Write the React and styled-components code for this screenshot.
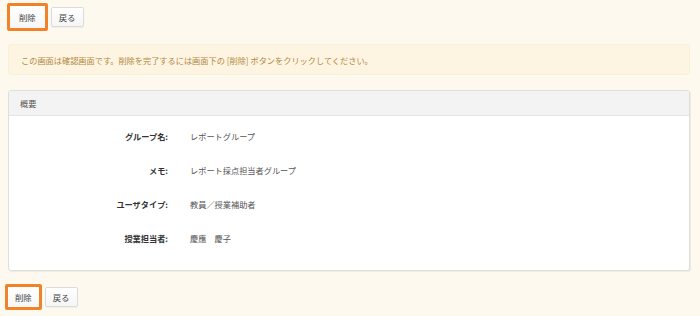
import React from "react";
import styled, { createGlobalStyle } from "styled-components";

const Global = createGlobalStyle`
  html, body { margin: 0; padding: 0; background: #fef9ee; }
  body { font-family: "Noto Sans CJK JP", "Noto Sans", sans-serif; font-size: 8.2px; color: #333; }
`;

const Page = styled.div`
  padding: 3px 10px 4px 8px;
  display: flex;
  flex-direction: column;
`;

const ButtonBar = styled.div`
  display: flex;
  align-items: center;
  gap: 3px;
  margin-left: ${(p) => p.$offset || 0}px;
`;

const Button = styled.button`
  font-family: inherit;
  font-size: 8.4px;
  color: #444;
  background: linear-gradient(#ffffff, #f6f6f6);
  border: ${(p) => (p.$focused ? "3px solid #f0832a" : "1px solid #dcdcdc")};
  border-radius: 2px;
  height: ${(p) => (p.$focused ? (p.$compact ? 26 : 28) : 20)}px;
  padding: 0 ${(p) => (p.$focused ? (p.$compact ? 7 : 9) : 7)}px;
  box-shadow: ${(p) => (p.$focused ? "none" : "0 1px 1px rgba(0,0,0,0.05)")};
  line-height: 1;
  cursor: pointer;
`;

const Alert = styled.div`
  margin-top: 13px;
  height: 31px;
  box-sizing: border-box;
  display: flex;
  align-items: center;
  padding: 0 12px;
  background: #fdf5e2;
  border: 1px solid #faf0d8;
  border-radius: 3px;
  color: #b3883f;
`;

const Panel = styled.section`
  margin-top: 15px;
  background: #fff;
  border: 1px solid #dedede;
  border-radius: 3px;
  box-shadow: 1px 1px 1px rgba(0, 0, 0, 0.06);
  overflow: hidden;
`;

const PanelHeader = styled.div`
  height: 24px;
  display: flex;
  align-items: center;
  padding: 0 11px;
  background: #f3f3f3;
  border-bottom: 1px solid #e4e4e4;
  color: #555;
`;

const Details = styled.dl`
  margin: 0;
  padding: 3px 0 15px;
  display: grid;
  grid-template-columns: 159px 1fr;
  grid-auto-rows: 34px;
  column-gap: 22px;
  align-items: center;
`;

const Term = styled.dt`
  margin: 0;
  text-align: right;
  font-weight: bold;
  color: #333;
`;

const Desc = styled.dd`
  margin: 0;
  color: #555;
`;

const Spacer = styled.div`
  height: 13px;
`;

const rows = [
  ["グループ名:", "レポートグループ"],
  ["メモ:", "レポート採点担当者グループ"],
  ["ユーザタイプ:", "教員／授業補助者"],
  ["授業担当者:", "慶應　慶子"],
];

function Actions({ offset, compact }) {
  return (
    <ButtonBar $offset={offset}>
      <Button $focused $compact={compact}>削除</Button>
      <Button>戻る</Button>
    </ButtonBar>
  );
}

export default function App() {
  return (
    <>
      <Global />
      <Page>
        <Actions offset={-1} />
        <Alert>この画面は確認画面です。削除を完了するには画面下の [削除] ボタンをクリックしてください。</Alert>
        <Panel>
          <PanelHeader>概要</PanelHeader>
          <Details>
            {rows.map(([k, v]) => (
              <React.Fragment key={k}>
                <Term>{k}</Term>
                <Desc>{v}</Desc>
              </React.Fragment>
            ))}
          </Details>
        </Panel>
        <Spacer />
        <Actions offset={-3} compact />
      </Page>
    </>
  );
}
